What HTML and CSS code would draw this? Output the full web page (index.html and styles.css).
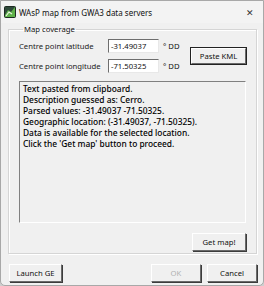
FILE: index.html
```html
<!DOCTYPE html>
<html>
<head>
<meta charset="utf-8" />
<title>WAsP map from GWA3 data servers</title>
<link rel="stylesheet" href="styles.css">
</head>
<body>
<div class="window">
    <div class="titlebar">
        <svg class="appicon" width="12" height="12" viewBox="0 0 12 12">
            <rect x="0.5" y="0.5" width="11" height="11" rx="1" fill="#2f4a3a" stroke="#1d2b22"/>
            <path d="M1 9 L4 4 L7 6 L11 1 L11 11 L1 11 Z" fill="#5fb24a"/>
            <path d="M2 10 L5 6 L8 8" stroke="#e8f3e0" stroke-width="1.2" fill="none"/>
        </svg>
        <span class="title">WAsP map from GWA3 data servers</span>
        <span class="close">&#x2715;</span>
    </div>
    <div class="content">
        <fieldset class="group">
            <legend>Map coverage</legend>
            <div class="coords">
                <div class="fields">
                    <div class="row">
                        <span class="label">Centre point latitude</span>
                        <span class="input">-31.49037</span>
                        <span class="unit">&deg; DD</span>
                    </div>
                    <div class="row">
                        <span class="label">Centre point longitude</span>
                        <span class="input">-71.50325</span>
                        <span class="unit">&deg; DD</span>
                    </div>
                </div>
                <button class="btn default paste">Paste KML</button>
            </div>
            <div class="log">
                <div>Text pasted from clipboard.</div>
                <div>Description guessed as: Cerro.</div>
                <div>Parsed values: -31.49037 -71.50325.</div>
                <div>Geographic location: (-31.49037, -71.50325).</div>
                <div>Data is available for the selected location.</div>
                <div>Click the 'Get map' button to proceed.</div>
            </div>
            <div class="actions">
                <button class="btn getmap">Get map!</button>
            </div>
        </fieldset>
        <div class="footer">
            <button class="btn launch">Launch GE</button>
            <span class="spacer"></span>
            <button class="btn ok" disabled>OK</button>
            <button class="btn cancel">Cancel</button>
        </div>
    </div>
</div>
</body>
</html>
```

FILE: styles.css
```css
body{
    margin:0;
    background:#cfcfcf;
    font-family:"Noto Sans","Open Sans",sans-serif;
    font-size:7.7px;
    color:#111;
}
.window{
    width:262px;
    height:284px;
    background:#f0f0f0;
    border:1px solid #a8a8a8;
    border-radius:0 0 5px 5px;
    display:flex;
    flex-direction:column;
}
.titlebar{
    height:22px;
    display:flex;
    align-items:center;
    padding-left:3px;
    background:#f3f3f3;
}
.appicon{
    margin-right:3px;
}
.title{
    font-size:8px;
    flex:1;
}
.close{
    font-size:9px;
    color:#333;
    margin-right:9px;
}
.content{
    flex:1;
    display:flex;
    flex-direction:column;
    padding:0 6px 0 7px;
}
.group{
    margin:0;
    padding:4px 10px 2px 10px;
    border:1px solid #d5d5d5;
    box-shadow:inset 1px 1px 0 #fff, 1px 1px 0 #fff;
}
.group legend{
    padding:0 1px;
    margin-left:4px;
    line-height:12px;
}
.coords{
    display:flex;
    align-items:flex-start;
}
.fields{
    display:flex;
    flex-direction:column;
    gap:6px;
    flex:1;
}
.row{
    display:flex;
    align-items:center;
    height:14px;
    white-space:nowrap;
}
.label{
    width:89px;
    flex-shrink:0;
    color:#222;
}
.input{
    flex-shrink:0;
    height:14px;
    line-height:13px;
    background:#fff;
    border-top:1px solid #6e6e6e;
    border-left:1px solid #6e6e6e;
    border-right:1px solid #e8e8e8;
    border-bottom:1px solid #e8e8e8;
    padding-left:2px;
    box-sizing:border-box;
    width:51px;
}
.unit{
    margin-left:4px;
}
.btn{
    font-family:inherit;
    font-size:7.7px;
    color:#111;
    background:#f0f0f0;
    border:1px solid;
    border-color:#fff #6a6a6a #6a6a6a #fff;
    box-shadow:1px 1px 0 #3c3c3c;
    padding:0;
    height:18px;
}
.default{
    outline:1px solid #222;
}
.paste{
    width:55px;
    height:16px;
    margin-top:9px;
    flex-shrink:0;
}
.log{
    margin-top:8px;
    height:142px;
    box-sizing:border-box;
    border-top:1px solid #808080;
    border-left:1px solid #808080;
    border-right:1px solid #fff;
    border-bottom:1px solid #fff;
    padding:1px 3px;
    font-size:8.4px;
    line-height:11px;
    font-weight:500;
    color:#000;
}
.actions{
    display:flex;
    justify-content:flex-end;
    margin-top:10px;
}
.getmap{
    width:54px;
}
.footer{
    display:flex;
    align-items:center;
    margin-top:10px;
    gap:6px;
}
.launch{
    width:53px;
    margin-left:1px;
}
.spacer{
    flex:1;
}
.ok{
    width:50px;
    color:#b0b0b0;
}
.cancel{
    width:50px;
}
```
